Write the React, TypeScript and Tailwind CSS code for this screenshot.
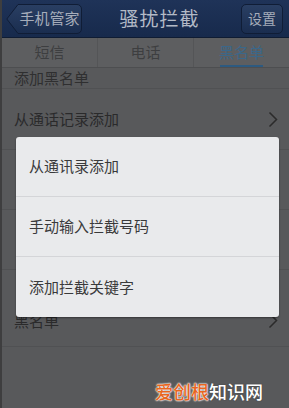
import React from "react";

const font = { fontFamily: '"Noto Sans CJK SC", "Noto Sans", sans-serif' };

function Chevron() {
  return (
    <svg width="10" height="17" viewBox="0 0 10 17" className="block">
      <path d="M1.5 1.5 L8.5 8.5 L1.5 15.5" fill="none" stroke="#2b2b2b" strokeWidth="1.5" />
    </svg>
  );
}

function BackButton() {
  return (
    <div className="relative w-[76px] h-[30px]">
      <svg width="76" height="30" viewBox="0 0 76 30" className="absolute inset-0">
        <defs>
          <linearGradient id="bb" x1="0" y1="0" x2="0" y2="1">
            <stop offset="0" stopColor="#2a3f63" />
            <stop offset="1" stopColor="#1a2d4f" />
          </linearGradient>
        </defs>
        <path
          d="M12 0.5 H71 a4.5 4.5 0 0 1 4.5 4.5 V25 a4.5 4.5 0 0 1 -4.5 4.5 H12 L0.8 15 Z"
          fill="url(#bb)"
          stroke="#101d36"
          strokeWidth="1"
        />
      </svg>
      <span className="absolute inset-0 flex items-center justify-center pl-[11px] text-[15px] text-[#a6adba]">手机管家</span>
    </div>
  );
}

export default function App() {
  return (
    <div className="relative w-[289px] h-[408px] overflow-hidden bg-[#58595b] border-l-2 border-[#3e3e3f]" style={font}>
      {/* Header */}
      <div className="h-[38px] flex items-center justify-between pl-[4px] pr-[6px] bg-gradient-to-b from-[#1f3358] to-[#172a4c] border-b border-[#0f1c33]">
        <BackButton />
        <span className="text-[19px] text-[#b3bac6] tracking-[1px] -ml-[4px]">骚扰拦截</span>
        <div className="w-[42px] h-[30px] rounded-[5px] border border-[#101d36] bg-gradient-to-b from-[#2a3f63] to-[#1a2d4f] flex items-center justify-center text-[14px] text-[#a6adba]">
          设置
        </div>
      </div>
      {/* Tabs */}
      <div className="h-[30px] flex bg-[#5d5e60] border-b border-[#4d4e50]">
        <div className="flex-1 flex items-center justify-center text-[15px] text-[#3d3e40] border-r border-[#545557]">短信</div>
        <div className="flex-1 flex items-center justify-center text-[15px] text-[#3d3e40] border-r border-[#545557]">电话</div>
        <div className="flex-1 relative flex items-center justify-center text-[15px] text-[#3b6789]">
          黑名单
          <div className="absolute bottom-[0px] left-[26px] w-[43px] h-[2px] bg-[#2d5a80]" />
        </div>
      </div>
      {/* Section header */}
      <div className="h-[21px] flex items-center pl-[12px] text-[15px] text-[#2f2f30] border-b border-[#505153]">添加黑名单</div>
      {/* Rows */}
      <div className="h-[61px] flex items-center justify-between pl-[12px] pr-[11px] text-[15px] text-[#2a2a2b] border-b border-[#505153]">
        <span>从通话记录添加</span>
        <Chevron />
      </div>
      <div className="h-[60px] border-b border-[#505153]" />
      <div className="h-[60px] border-b border-[#505153]" />
      <div className="h-[77px] flex items-end justify-between pl-[12px] pr-[11px] pb-[17px] text-[15px] text-[#2a2a2b] border-b border-[#505153]">
        <span className="leading-[16px]">黑名单</span>
        <Chevron />
      </div>

      {/* Popup */}
      <div className="absolute left-[14px] top-[137px] w-[263px] rounded-[3px] bg-[#e9eaec] shadow-[0_1px_2px_rgba(0,0,0,0.4)] text-[15px] text-[#3a3a3b]">
        <div className="h-[60px] flex items-center pl-[13px] border-b border-[#d4d5d8]">从通讯录添加</div>
        <div className="h-[60px] flex items-center pl-[13px] border-b border-[#d4d5d8]">手动输入拦截号码</div>
        <div className="h-[60px] flex items-center pl-[13px]">添加拦截关键字</div>
      </div>

      {/* Watermark */}
      <div className="absolute left-[153px] top-[380px] text-[18px] leading-[22px] font-medium">
        <span className="text-[#e8661f] [text-shadow:0_0_2px_#fff,0_0_2px_#fff,0_0_1px_#fff]">爱创根</span>
        <span className="text-[#ffffff] [text-shadow:0_0_1px_#444,0_0_1px_#444]">知识网</span>
      </div>
    </div>
  );
}
